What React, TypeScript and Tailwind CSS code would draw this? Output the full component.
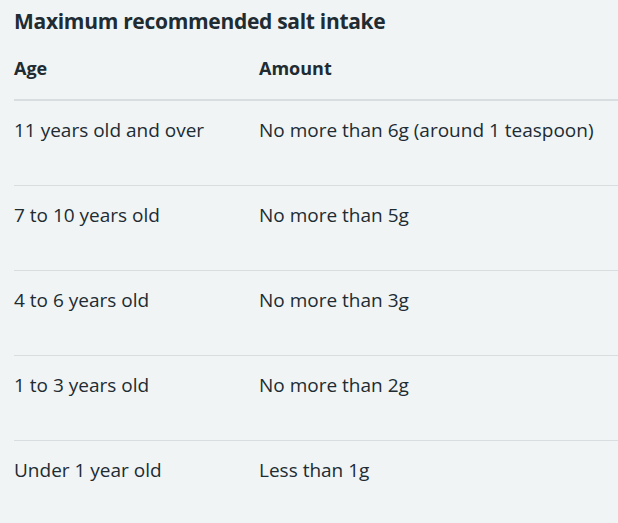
import React from 'react';

const rows = [
  { age: '11 years old and over', amount: 'No more than 6g (around 1 teaspoon)' },
  { age: '7 to 10 years old', amount: 'No more than 5g' },
  { age: '4 to 6 years old', amount: 'No more than 3g' },
  { age: '1 to 3 years old', amount: 'No more than 2g' },
  { age: 'Under 1 year old', amount: 'Less than 1g' },
];

const App: React.FC = () => {
  return (
    <div className="min-h-screen w-full bg-[#f0f4f5] pl-[14px] text-[#212b32] font-['Open_Sans',sans-serif] overflow-hidden">
      <table className="w-full border-collapse text-left">
        <caption className="text-left text-[21px] font-bold leading-[42px] h-[42px] tracking-[-0.3px]">
          Maximum recommended salt intake
        </caption>
        <thead>
          <tr className="border-b-2 border-[#d8dde0]">
            <th className="w-[245px] pt-[12px] pb-[17px] text-[18px] font-bold leading-[28px]">Age</th>
            <th className="pt-[12px] pb-[17px] text-[18px] font-bold leading-[28px]">Amount</th>
          </tr>
        </thead>
        <tbody>
          {rows.map((row, i) => (
            <tr key={i} className={i < rows.length - 1 ? 'border-b border-[#d8dde0]' : ''}>
              <td className="pt-[15px] pb-[41px] align-top text-[19px] leading-[28px]">{row.age}</td>
              <td className="pt-[15px] pb-[41px] align-top text-[19px] leading-[28px]">{row.amount}</td>
            </tr>
          ))}
        </tbody>
      </table>
    </div>
  );
};

export default App;
